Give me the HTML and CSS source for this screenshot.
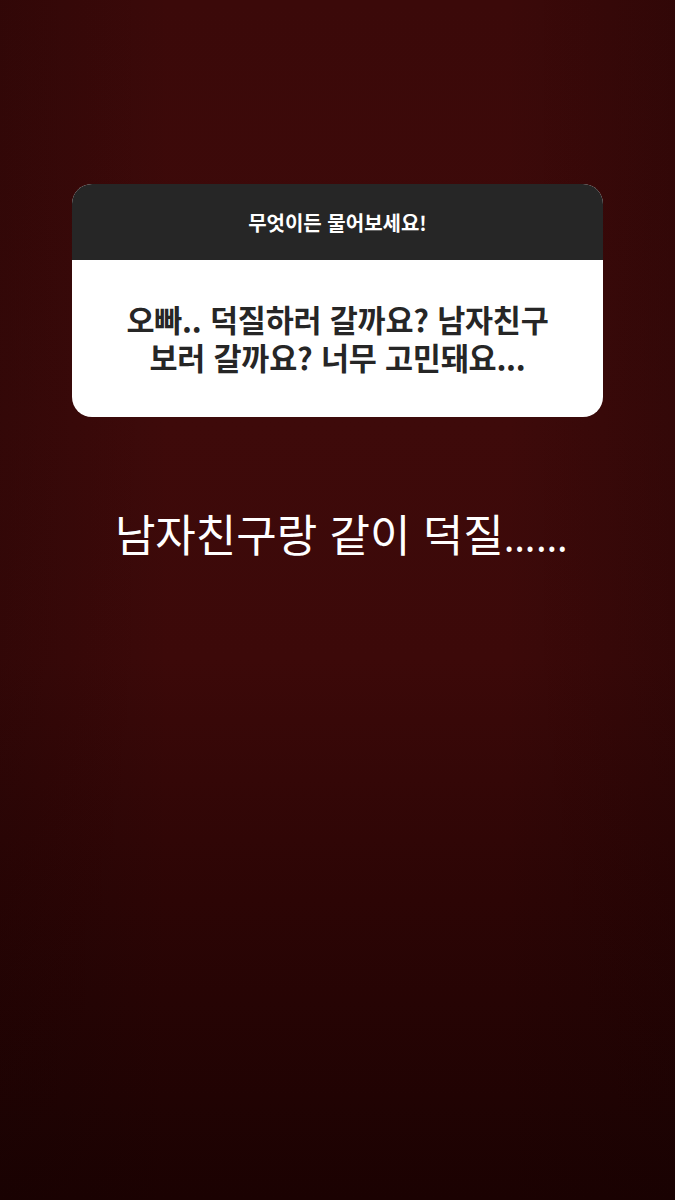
FILE: index.html
```html
<!DOCTYPE html>
<html lang="ko">

<head>
    <meta charset="utf-8">
    <title>질문 스토리</title>
    <link rel="stylesheet" href="styles.css">
</head>

<body>
    <div class="story">
        <div class="question-card">
            <div class="question-header">무엇이든 물어보세요!</div>
            <div class="question-body">
                <p class="question-line">오빠.. 덕질하러 갈까요? 남자친구</p>
                <p class="question-line">보러 갈까요? 너무 고민돼요...</p>
            </div>
        </div>
        <div class="answer">남자친구랑 같이 덕질<span class="dots">……</span></div>
    </div>
</body>

</html>
```

FILE: styles.css
```css
/* Page */
body {
    margin: 0;
    background-color: #1c0303;
    font-family: "Noto Sans CJK KR", "Noto Sans", sans-serif;
}

.story {
    width: 675px;
    height: 1200px;
    overflow: hidden;
    display: flex;
    flex-direction: column;
    align-items: center;
    background:
        linear-gradient(to right, rgba(20, 2, 2, 0.25) 0%, rgba(20, 2, 2, 0) 25%, rgba(20, 2, 2, 0) 75%, rgba(20, 2, 2, 0.25) 100%),
        linear-gradient(to bottom, #3b0909 0%, #3e0a0a 35%, #3c0909 55%, #2c0505 75%, #1b0202 100%);
}

/* Question sticker */
.question-card {
    width: 531px;
    margin-top: 184px;
    border-radius: 20px;
    overflow: hidden;
    background-color: #ffffff;
}

.question-header {
    height: 76px;
    display: flex;
    align-items: center;
    justify-content: center;
    background-color: #262626;
    color: #ffffff;
    font-size: 20px;
    font-weight: 700;
}

.question-body {
    height: 157px;
    display: flex;
    flex-direction: column;
    justify-content: center;
    gap: 2px;
    padding: 0 20px 2px;
    box-sizing: border-box;
    text-align: center;
    color: #262626;
    font-size: 30.5px;
    font-weight: 700;
    letter-spacing: -0.2px;
}

.question-line {
    margin: 0;
    height: 36px;
    line-height: 36px;
}

/* Answer text */
.answer {
    margin-top: 88px;
    padding-left: 8px;
    color: #ffffff;
    font-size: 44px;
    font-weight: 400;
    line-height: 56px;
}

.dots {
    font-family: "Noto Sans", sans-serif;
    font-size: 40px;
    letter-spacing: 0.5px;
}
```
